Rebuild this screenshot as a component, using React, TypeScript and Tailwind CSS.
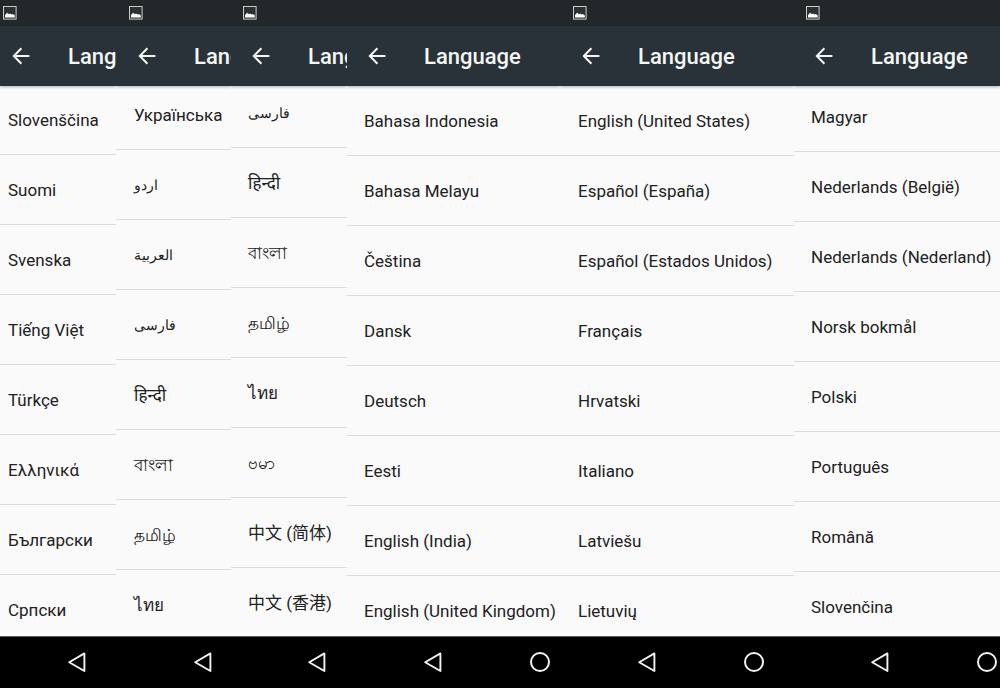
import React from 'react';

interface Panel {
  id: string;
  languages: string[];
  hasNotification: boolean;
  hasHome: boolean;
  inset: string;
  scroll: string;
}

const PANELS: Panel[] = [
  {
    id: 'slovenian',
    languages: ['Slovenščina', 'Suomi', 'Svenska', 'Tiếng Việt', 'Türkçe', 'Ελληνικά', 'Български', 'Српски'],
    hasNotification: true,
    hasHome: false,
    inset: 'pl-[3px]',
    scroll: '-mt-px',
  },
  {
    id: 'ukrainian',
    languages: ['Українська', 'اردو', 'العربية', 'فارسی', 'हिन्दी', 'বাংলা', 'தமிழ்', 'ไทย'],
    hasNotification: true,
    hasHome: false,
    inset: 'pl-[13px]',
    scroll: '-mt-1.5',
  },
  {
    id: 'persian',
    languages: ['فارسی', 'हिन्दी', 'বাংলা', 'தமிழ்', 'ไทย', 'ဗမာ', '中文 (简体)', '中文 (香港)'],
    hasNotification: true,
    hasHome: false,
    inset: 'pl-3',
    scroll: '-mt-2',
  },
  {
    id: 'indonesian',
    languages: ['Bahasa Indonesia', 'Bahasa Melayu', 'Čeština', 'Dansk', 'Deutsch', 'Eesti', 'English (India)', 'English (United Kingdom)'],
    hasNotification: false,
    hasHome: true,
    inset: 'pl-3',
    scroll: 'mt-0',
  },
  {
    id: 'english',
    languages: ['English (United States)', 'Español (España)', 'Español (Estados Unidos)', 'Français', 'Hrvatski', 'Italiano', 'Latviešu', 'Lietuvių'],
    hasNotification: true,
    hasHome: true,
    inset: 'pl-[13px]',
    scroll: 'mt-0',
  },
  {
    id: 'hungarian',
    languages: ['Magyar', 'Nederlands (België)', 'Nederlands (Nederland)', 'Norsk bokmål', 'Polski', 'Português', 'Română', 'Slovenčina'],
    hasNotification: true,
    hasHome: true,
    inset: 'pl-3',
    scroll: '-mt-1',
  },
];

// Arabic script runs wide in the fallback font
const isArabic = (text: string) => /[\u0600-\u06ff]/.test(text);

const ImageIcon = () => (
  <svg width="14" height="14" viewBox="0 0 14 14" aria-hidden="true">
    <rect x="0.5" y="0.5" width="12.6" height="12.6" fill="#2b3033" stroke="#c9cccd" />
    <path d="M2 11.4V9L4.2 6.8L6 8.2L7 7.6L8.4 8.6L9.8 8L11.8 9.6V11.4Z" fill="#fff" />
  </svg>
);

const ArrowIcon = () => (
  <svg width="18" height="18" viewBox="0 0 18 18" fill="none" stroke="#f5f7f7" strokeWidth="2" aria-hidden="true">
    <path d="M17.4 9H2M9.4 1.2L1.8 9L9.4 16.8" />
  </svg>
);

const BackIcon = () => (
  <svg width="18" height="20" viewBox="0 0 18 20" fill="none" stroke="#f2f2f2" strokeWidth="1.9" strokeLinejoin="round" aria-hidden="true">
    <path d="M1.2 10.2L16.4 1.4V19Z" />
  </svg>
);

const HomeIcon = () => (
  <svg width="20" height="20" viewBox="0 0 20 20" fill="none" stroke="#f2f2f2" strokeWidth="2" aria-hidden="true">
    <circle cx="10" cy="10" r="9" />
  </svg>
);

const LanguagePanel: React.FC<{ panel: Panel }> = ({ panel }) => (
  <section className="flex min-h-0 min-w-0 flex-col overflow-hidden">
    <div className={`flex h-[26px] shrink-0 items-center bg-[#22272a] ${panel.inset}`}>
      {panel.hasNotification && <ImageIcon />}
    </div>
    <header className={`relative flex h-[60px] shrink-0 items-center bg-[#283238] shadow-[0_1px_3px_rgba(0,0,0,0.3)] ${panel.inset}`}>
      <button type="button" aria-label="Back" className="ml-[9px] shrink-0">
        <ArrowIcon />
      </button>
      <h1 className="ml-[38px] pt-0.5 text-[22px] leading-7 font-medium text-[#f5f7f7]">Language</h1>
    </header>
    <div className="min-h-0 flex-1 overflow-y-auto [scrollbar-width:none]">
      <ul className={panel.scroll}>
        {panel.languages.map((language) => (
          <li key={language} className="border-b border-[#dcdcdc]">
            <button type="button" className={`flex h-[69px] w-full items-center leading-6 whitespace-nowrap text-[#212121] ${isArabic(language) ? 'text-sm' : 'text-[17px]'} ${panel.inset}`}>
              <span className="pl-[5px]">{language}</span>
            </button>
          </li>
        ))}
      </ul>
    </div>
    <nav className={`flex h-[52px] shrink-0 items-center border-t border-[#5c5f5f] bg-black pb-0.5 ${panel.inset}`}>
      <button type="button" aria-label="Go back" className="ml-[65px] shrink-0">
        <BackIcon />
      </button>
      {panel.hasHome && (
        <button type="button" aria-label="Home" className="ml-[88px] shrink-0">
          <HomeIcon />
        </button>
      )}
    </nav>
  </section>
);

export default function App() {
  return (
    <main className="grid h-screen grid-cols-[116fr_115fr_116fr_213fr_234fr_206fr] grid-rows-[minmax(0,1fr)] bg-[#fafafa] font-[Roboto,'Noto_Sans','Noto_Sans_CJK_SC',sans-serif]">
      {PANELS.map((panel) => (
        <LanguagePanel key={panel.id} panel={panel} />
      ))}
    </main>
  );
}
